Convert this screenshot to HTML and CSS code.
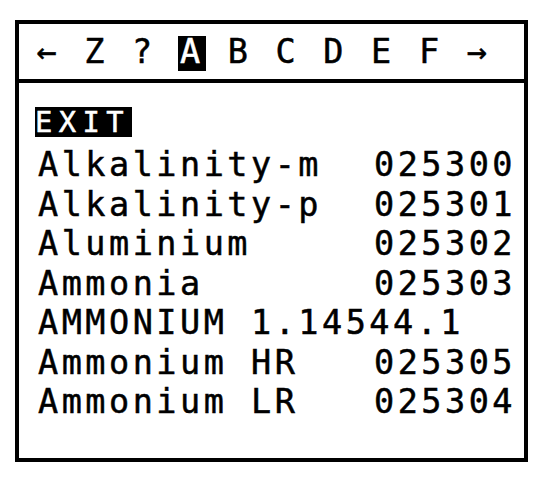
FILE: index.html
```html
<!DOCTYPE html>
<html>
<head>
<meta charset="utf-8">
<link rel="stylesheet" href="styles.css">
</head>
<body>
<div class="screen">
  <div class="tabs">
    <span class="tab">←</span>
    <span class="tab">Z</span>
    <span class="tab">?</span>
    <span class="tab active">A</span>
    <span class="tab">B</span>
    <span class="tab">C</span>
    <span class="tab">D</span>
    <span class="tab">E</span>
    <span class="tab">F</span>
    <span class="tab">→</span>
  </div>
  <div class="list">
    <div class="row"><span class="exit">EXIT</span></div>
    <div class="row"><span>Alkalinity-m</span><span>025300</span></div>
    <div class="row"><span>Alkalinity-p</span><span>025301</span></div>
    <div class="row"><span>Aluminium</span><span>025302</span></div>
    <div class="row"><span>Ammonia</span><span>025303</span></div>
    <div class="row"><span>AMMONIUM 1.14544.1</span></div>
    <div class="row"><span>Ammonium HR</span><span>025305</span></div>
    <div class="row"><span>Ammonium LR</span><span>025304</span></div>
  </div>
</div>
</body>
</html>
```

FILE: styles.css
```css
html, body {
  margin: 0;
  padding: 0;
  background: #fff;
}
body {
  font-family: "DejaVu Sans Mono", "Liberation Mono", monospace;
  font-size: 33.5px;
  letter-spacing: 3.5px;
  color: #000;
  -webkit-text-stroke: 0.5px currentColor;
}
.screen {
  box-sizing: border-box;
  margin: 20px 0 0 15px;
  width: 513px;
  height: 442px;
  border: 4px solid #000;
}
.tabs {
  box-sizing: border-box;
  height: 59px;
  border-bottom: 4px solid #000;
  display: flex;
  align-items: center;
  padding-left: 17.5px;
  line-height: 1;
}
.tab {
  width: 47.8px;
  flex: none;
  white-space: pre;
}
.tab.active {
  position: relative;
  z-index: 0;
  color: #fff;
}
.tab.active::before {
  content: "";
  position: absolute;
  left: -2px;
  top: 1px;
  width: 28px;
  height: 35px;
  background: #000;
  z-index: -1;
}
.list {
  padding: 22.5px 8px 0 19px;
  line-height: 39.5px;
}
.row {
  display: flex;
  justify-content: space-between;
  align-items: flex-start;
  white-space: pre;
  height: 39.5px;
}
.exit {
  display: inline-block;
  background: #000;
  color: #fff;
  font-size: 28.8px;
  letter-spacing: 6.4px;
  line-height: 30px;
  height: 30px;
  margin-top: 1.5px;
  margin-left: -3px;
  padding-right: 2px;
}
```
